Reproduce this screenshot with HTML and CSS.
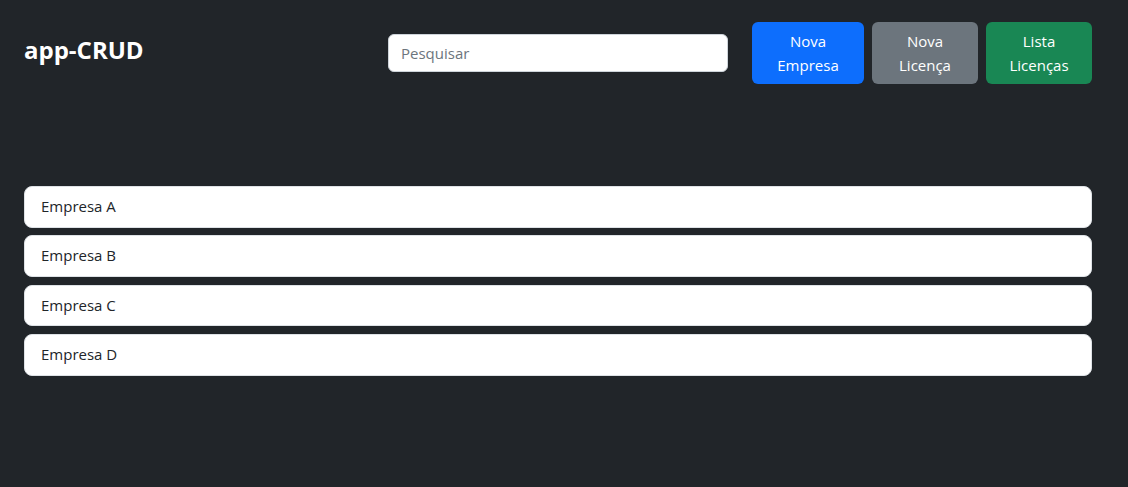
FILE: index.html
```html
<!DOCTYPE html>
<html lang="pt-BR">
<head>
<meta charset="utf-8">
<title>app-CRUD</title>
<link rel="stylesheet" href="styles.css">
</head>
<body>
<div class="page">
  <header class="topbar">
    <h1 class="brand">app-CRUD</h1>
    <div class="actions">
      <input class="search" type="text" placeholder="Pesquisar">
      <div class="buttons">
        <button class="btn btn-primary">Nova<br>Empresa</button>
        <button class="btn btn-secondary">Nova<br>Licença</button>
        <button class="btn btn-success">Lista<br>Licenças</button>
      </div>
    </div>
  </header>
  <ul class="list">
    <li class="item">Empresa A</li>
    <li class="item">Empresa B</li>
    <li class="item">Empresa C</li>
    <li class="item">Empresa D</li>
  </ul>
</div>
</body>
</html>
```
FILE: styles.css
```css
* { box-sizing: border-box; }
html, body {
  margin: 0;
  background: #212529;
  font-family: "Open Sans", "Noto Sans", sans-serif;
  color: #212529;
}
.page {
  padding: 22px 36px 0 24px;
}
.topbar {
  display: flex;
  align-items: center;
  justify-content: space-between;
  height: 62px;
}
.brand {
  margin: 0;
  color: #fff;
  font-size: 24px;
  font-weight: 700;
  line-height: 1.2;
  margin-top: -6px;
}
.actions {
  display: flex;
  align-items: center;
  gap: 24px;
}
.search {
  width: 340px;
  height: 38px;
  padding: 6px 12px;
  border: 1px solid #ced4da;
  border-radius: 6px;
  font-family: inherit;
  font-size: 15px;
  color: #212529;
  background: #fff;
  outline: none;
}
.search::placeholder { color: #6c757d; }
.buttons {
  display: flex;
  gap: 8px;
}
.btn {
  border: 1px solid transparent;
  border-radius: 6px;
  padding: 6px 12px;
  font-family: inherit;
  font-size: 15px;
  line-height: 24px;
  color: #fff;
  text-align: center;
  height: 62px;
  cursor: pointer;
}
.btn-primary { background: #0d6efd; width: 112px; }
.btn-secondary { background: #6c757d; width: 106px; }
.btn-success { background: #198754; width: 106px; }
.list {
  list-style: none;
  margin: 102px 0 0;
  padding: 0;
  display: flex;
  flex-direction: column;
  gap: 7.67px;
}
.item {
  background: #fff;
  border: 1px solid #dee2e6;
  border-radius: 8px;
  padding: 7px 16px 8px;
  font-size: 15px;
  line-height: 24px;
  height: 41.67px;
}
```
